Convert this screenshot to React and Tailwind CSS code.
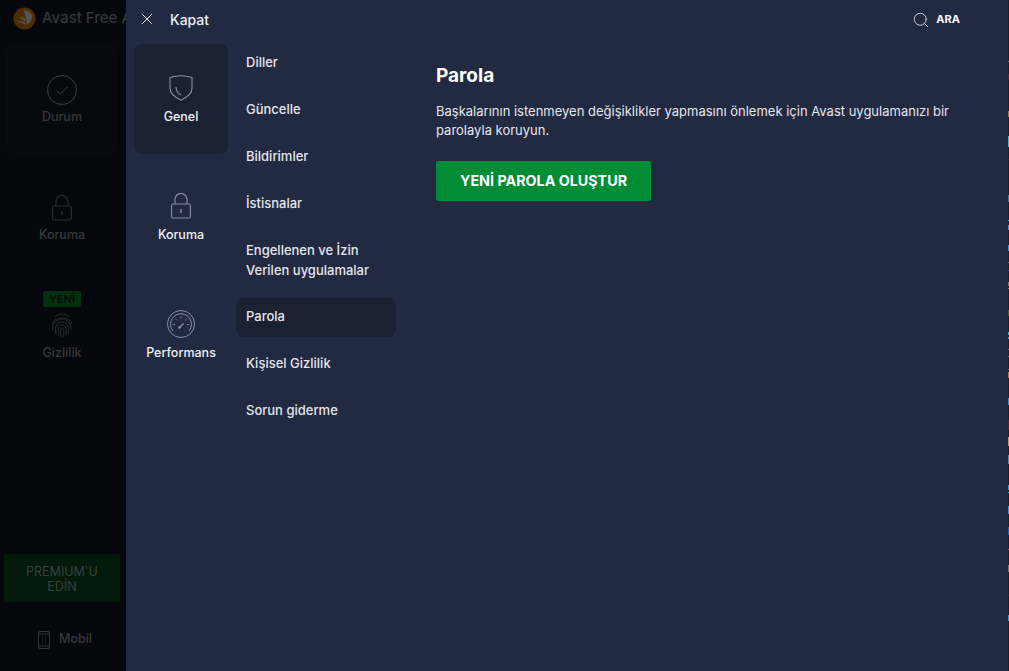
import { X, Search } from "lucide-react";

const FONT = "font-['Inter','Liberation_Sans',sans-serif]";

const MENU = [
  { label: "Diller" },
  { label: "Güncelle" },
  { label: "Bildirimler" },
  { label: "İstisnalar" },
  { label: "Engellenen ve İzin Verilen uygulamalar", tall: true },
  { label: "Parola", active: true },
  { label: "Kişisel Gizlilik" },
  { label: "Sorun giderme" },
];

// leftovers of the window behind, visible in the last pixel column
const EDGE = [
  "h-[61px]", "h-px bg-[#6a6d74]", "h-[12px]", "h-[6px] bg-[#4a2630]", "h-[31px]", "h-[6px] bg-[#a07a3a]",
  "h-[19px]", "h-[11px] bg-[#4fb5c5]", "h-[12px]", "h-px bg-[#2e2a55]", "h-[35px]", "h-[7px] bg-[#4a7391]",
  "h-[18px]", "h-px bg-[#45a8c8]", "h-[4px]", "h-[5px] bg-[#3a9ad0]", "h-[15px]", "h-[6px] bg-[#3a94d8]",
  "h-[11px]", "h-px bg-[#6a6d74]", "h-[7px]", "h-px bg-[#1f4f80]", "h-[11px]", "h-[4px] bg-[#85705c]",
  "h-[2px]", "h-px bg-[#808080]", "h-[21px]", "h-[6px] bg-[#4a5a24]", "h-[16px]", "h-[3px] bg-[#45a8c8]",
  "h-[2px]", "h-[2px] bg-[#3a9ad0]", "h-[10px]", "h-px bg-[#6a6d74]", "h-[6px]", "h-px bg-[#6a6d74]",
  "h-[12px]", "h-px bg-[#6a6d74]", "h-[2px]", "h-[6px] bg-[#b07a3c]", "h-[20px]", "h-[7px] bg-[#3a8ed0]",
  "h-[15px]", "h-[10px] bg-[#4a2630]", "h-[7px]", "h-[9px] bg-[#b89a68]", "h-[9px]", "h-[9px] bg-[#5e88a8]",
  "h-[21px]", "h-[5px] bg-[#3a9ad0]", "h-[2px]", "h-px bg-[#3a9ad0]", "h-[13px]", "h-[8px] bg-[#3a94d8]",
  "h-[13px]", "h-[8px] bg-[#1c60c0]", "h-[14px]", "h-px bg-[#3a80b0]", "h-[15px]", "h-[7px] bg-[#7a7468]",
  "h-[23px]", "h-px bg-[#4a2630]", "h-[19px]", "h-[6px] bg-[#3a9ad0]",
];

function AvastLogo() {
  return (
    <svg viewBox="0 0 24 24" className="w-[23px] h-[23px] shrink-0">
      <circle cx="12" cy="12" r="11.500" fill="#4f2c08" />
      <path d="M11 3.500c4-.5 8 2 9.500 6-.5 4-3 7-6 9C14 13.500 13 8.500 11 3.500z" fill="#57534f" />
      <path d="M6.500 10.500c2-.5 4.500 0 6 1.500l.8 3.500c-2.500-2-5-3.500-6.800-5z" fill="#57534f" />
      <path d="M4 15.500c3-1.300 6.500-.8 9 1l.5 2c-3-1.800-6.500-2.700-9.500-3z" fill="#57534f" />
    </svg>
  );
}

function CheckIcon() {
  return (
    <svg viewBox="0 0 30 30" fill="none" stroke="#3d3f44" strokeWidth="1" className="w-[30px] h-[30px]">
      <circle cx="15" cy="15" r="14.500" />
      <path d="M9.500 15.500l4 3.500 7-7" />
    </svg>
  );
}

function ShieldIcon() {
  return (
    <svg viewBox="0 0 24 26" fill="none" stroke="#8b90a0" strokeWidth="1.100" className="w-[24px] h-[26px]">
      <path d="M1 2.600C5 1.200 8.500.8 12 .8s7 .4 11 1.800v11c0 4.800-5 8.800-11 11.600C6 22.400 1 18.400 1 13.600z" />
      <path d="M7 12c.3 3.500 2 6.500 5 8" />
    </svg>
  );
}

function LockIcon({ color, dot }) {
  return (
    <svg viewBox="0 0 20 26" fill="none" stroke={color} strokeWidth="1.100" className="w-[20px] h-[26px]">
      <rect x=".6" y="11" width="18.800" height="14" rx="1.500" />
      <path d="M4 11V6.500a6 6 0 0 1 12 0V11" />
      <path d="M10 16v4" stroke={dot} strokeWidth="1.400" />
    </svg>
  );
}

function GaugeIcon() {
  return (
    <svg viewBox="0 0 28 28" fill="none" stroke="#8b90a0" strokeWidth="1" className="w-[28px] h-[28px]">
      <circle cx="14" cy="14" r="13.500" />
      <path d="M6 21a10.500 10.500 0 1 1 16 0" />
      <path d="M14 6.500v2M8.500 9l1.300 1.300M19.500 9l-1.300 1.300M6.200 14.500h1.800M20 14.500h1.800" />
      <path d="M12.500 17.500l4-4" strokeWidth="1.500" />
      <circle cx="12.500" cy="17.500" r="1" fill="#8b90a0" />
    </svg>
  );
}

function FingerprintIcon() {
  return (
    <svg viewBox="0 0 22 26" fill="none" stroke="#2c2e32" strokeWidth="1" className="w-[22px] h-[26px]">
      <path d="M4 4C8 0 14 0 18 4" />
      <path d="M1 11C4 3 18 3 21 11" />
      <path d="M1.500 17C1 8 8 6 11 6s9 2 9 11" />
      <path d="M5 21C3 12 7 9 11 9s7 3 6.500 11" />
      <path d="M8 23C6 16 7 12 11 12s4.500 4 4 10" />
      <path d="M11 25c-2-5-2-10 0-10s2 4 1.500 9" />
    </svg>
  );
}

function PhoneIcon() {
  return (
    <svg viewBox="0 0 12 18" fill="none" stroke="#35373b" strokeWidth="1" className="w-[12px] h-[18px]">
      <rect x=".5" y=".5" width="11" height="17" rx="1.500" />
      <path d="M.5 3h11M.5 15h11" />
      <path d="M4 6h1M7 6h1M4 9h1M7 9h1M4 12h1M7 12h1" />
    </svg>
  );
}

function Category({ icon, label, active }) {
  return (
    <div className={`h-[110px] rounded-lg flex flex-col items-center pt-[30px] ${active ? "bg-[#1a2133]" : ""}`}>
      <div className="h-[28px] flex items-center justify-center">{icon}</div>
      <div className="mt-[7px] text-[12.5px] leading-[16px] font-medium text-[#eef0f4]">{label}</div>
    </div>
  );
}

function Dim({ icon, label }) {
  return (
    <div className="h-[110px] rounded-lg flex flex-col items-center pt-[32px]">
      <div className="h-[28px] flex items-center justify-center">{icon}</div>
      <div className="mt-[5px] text-[12.5px] leading-[16px] font-medium text-[#37383c]">{label}</div>
    </div>
  );
}

export default function App() {
  return (
    <div className={`h-[671px] w-full flex overflow-hidden ${FONT} bg-[#05070c]`}>
      {/* dimmed sidebar behind the settings panel */}
      <aside className="w-[126px] shrink-0 h-full flex flex-col overflow-hidden">
        <div className="h-[44px] pl-[13px] flex items-center gap-[6px] whitespace-nowrap overflow-hidden pb-[7px]">
          <AvastLogo />
          <span className="text-[15px] font-medium text-[#35363a]">Avast Free Antivirus</span>
        </div>
        <div className="px-[6px] flex flex-col gap-[8px] pr-[8px]">
          <div className="rounded-lg bg-[#08090e]">
            <Dim icon={<CheckIcon />} label="Durum" />
          </div>
          <Dim icon={<LockIcon color="#2b2d33" dot="#2b2d33" />} label="Koruma" />
          <div className="h-[110px] flex flex-col items-center pt-[11px]">
            <div className="h-[16px] px-[6px] rounded-[3px] bg-[#03310f] text-[11px] leading-[16px] font-semibold text-[#070b0c]">YENİ</div>
            <div className="mt-[6px] h-[26px]"><FingerprintIcon /></div>
            <div className="mt-[6px] text-[12.5px] leading-[16px] font-medium text-[#37383c]">Gizlilik</div>
          </div>
        </div>
        <div className="mt-auto pl-[4px] pr-[6px]">
          <div className="h-[48px] pt-[2px] rounded-[2px] bg-[#021a09] flex items-center justify-center text-center text-[12.5px] leading-[15px] text-[#3b403f]">
            PREMIUM'U<br />EDİN
          </div>
          <div className="h-[69px] flex items-center gap-[9px] pl-[34px] pt-[6px]">
            <PhoneIcon />
            <span className="text-[12.5px] font-medium text-[#37383c]">Mobil</span>
          </div>
        </div>
      </aside>

      {/* settings panel */}
      <main className="flex-1 h-full bg-[#222a42] flex flex-col min-w-0">
        <header className="h-[44px] shrink-0 flex items-center pb-[6px]">
          <X className="ml-[12px] w-[18px] h-[18px] text-white" strokeWidth={1.200} absoluteStrokeWidth />
          <span className="ml-[14px] text-[14px] font-medium text-[#eef0f4]">Kapat</span>
          <Search className="ml-auto w-[18px] h-[18px] mt-[2px] text-[#d5d8e0]" strokeWidth={1.200} absoluteStrokeWidth />
          <span className="ml-[6px] mr-[48px] text-[11px] font-bold text-white">ARA</span>
        </header>
        <div className="flex flex-1">
          <div className="ml-[8px] w-[94px] flex flex-col gap-[8px]">
            <Category active icon={<ShieldIcon />} label="Genel" />
            <Category icon={<LockIcon color="#8b90a0" dot="#8b90a0" />} label="Koruma" />
            <Category icon={<GaugeIcon />} label="Performans" />
          </div>
          <nav className="ml-[8px] w-[160px] flex flex-col gap-[8px]">
            {MENU.map((m) => (
              <div
                key={m.label}
                className={`px-[10px] rounded-lg flex items-center text-[13px] leading-[20px] font-medium text-[#e4e6ec] ${m.tall ? "h-[58px] pb-[2px]" : "h-[39px] pb-[3px]"} ${m.active ? "bg-[#1a2133]" : ""}`}
              >
                {m.label}
              </div>
            ))}
          </nav>
          <section className="ml-[40px] w-[520px] pt-[20px]">
            <h1 className="text-[19px] leading-[24px] font-bold text-white">Parola</h1>
            <p className="mt-[14px] text-[13px] leading-[19px] text-[#e4e6ec]">
              Başkalarının istenmeyen değişiklikler yapmasını önlemek için Avast uygulamanızı bir parolayla koruyun.
            </p>
            <button className="mt-[21px] w-[215px] h-[40px] rounded-[2px] bg-[#008d36] text-[14.3px] font-bold text-white">
              YENİ PAROLA OLUŞTUR
            </button>
          </section>
        </div>
      </main>

      <div className="w-px shrink-0 h-full bg-[#1c1e28] flex flex-col">
        {EDGE.map((c, i) => (
          <div key={i} className={c} />
        ))}
      </div>
    </div>
  );
}
